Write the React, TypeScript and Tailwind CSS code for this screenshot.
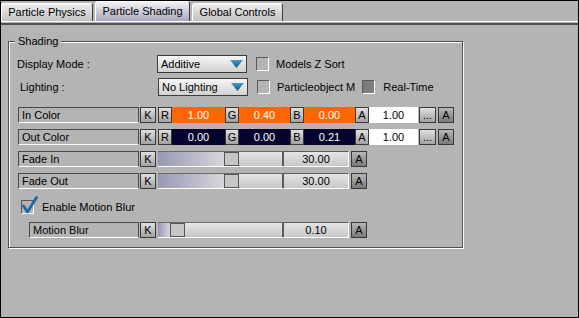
import React from 'react';

const BG = 'bg-[#b4b4b4]';

const Tab: React.FC<{ label: string; active?: boolean; w: string }> = ({ label, active, w }) => (
  <div
    className={`${w} ${active ? 'h-[20px] from-[#f2f2f4] to-[#a8a8be]' : 'h-[18px] from-[#eeeeee] to-[#c2c2c2]'} bg-linear-to-b rounded-t-[3px] border-t border-l border-white border-r border-r-[#3c3c3c] flex items-center justify-center leading-none`}
  >
    {label}
  </div>
);

const Dropdown: React.FC<{ value: string }> = ({ value }) => (
  <div className="w-[90px] h-[18px] border border-[#3c3c3c] bg-linear-to-b from-[#f6f6f6] to-[#d2d2d2] flex items-center justify-between pl-[3px] pr-[3px]">
    <span>{value}</span>
    <svg width="13" height="8" viewBox="0 0 13 8">
      <defs>
        <linearGradient id="tri" x1="0" y1="0" x2="0" y2="1">
          <stop offset="0" stopColor="#4a9bd0" />
          <stop offset="1" stopColor="#11557f" />
        </linearGradient>
      </defs>
      <polygon points="0,0 13,0 6.5,8" fill="url(#tri)" />
    </svg>
  </div>
);

const CheckBox: React.FC<{ fill?: boolean }> = ({ fill }) => (
  <div
    className={`w-[13px] h-[14px] border-t border-l border-[#5a5a5a] border-b border-r border-b-white border-r-white ${fill ? 'bg-[#7c7c7c]' : ''}`}
  />
);

const LabelBox: React.FC<{ label: string; w?: string }> = ({ label, w = 'w-[121px]' }) => (
  <div className={`${w} h-[16px] border-t border-l border-r border-[#4a4a4a] border-b border-b-white pl-[3px] flex items-center`}>
    {label}
  </div>
);

const KeyBtn: React.FC<{ t: string; dark?: boolean; w?: string }> = ({ t, dark, w = 'w-[16px]' }) => (
  <div
    className={`${w} h-[16px] border border-[#3a3a3a] bg-linear-to-b ${dark ? 'from-[#b8b8b8] to-[#7a7a7a]' : 'from-[#e0e0e0] to-[#a2a2a2]'} flex items-center justify-center leading-none`}
  >
    {t}
  </div>
);

const ColorRow: React.FC<{ label: string; vals: string[]; bg: string }> = ({ label, vals, bg }) => (
  <div className="flex items-center h-[16px]">
    <LabelBox label={label} />
    <div className="w-px" />
    <KeyBtn t="K" />
    <div className="w-[2px]" />
    <KeyBtn t="R" w="w-[14px]" />
    <div className={`w-[53px] h-[16px] ${bg} text-white flex items-center justify-center`}>{vals[0]}</div>
    <KeyBtn t="G" w="w-[14px]" />
    <div className={`w-[51px] h-[16px] ${bg} text-white flex items-center justify-center`}>{vals[1]}</div>
    <KeyBtn t="B" w="w-[14px]" />
    <div className={`w-[51px] h-[16px] ${bg} text-white flex items-center justify-center`}>{vals[2]}</div>
    <KeyBtn t="A" w="w-[14px]" />
    <div className="w-[49px] h-[16px] bg-white flex items-center justify-center">1.00</div>
    <div className="w-px" />
    <KeyBtn t="..." w="w-[17px]" />
    <div className="w-[2px]" />
    <KeyBtn t="A" dark />
  </div>
);

const SliderRow: React.FC<{ label: string; value: string; pos: number; labelW?: string; indent?: string }> = ({
  label,
  value,
  pos,
  labelW,
  indent = '',
}) => (
  <div className={`flex items-center h-[16px] ${indent}`}>
    <LabelBox label={label} w={labelW} />
    <div className="w-px" />
    <KeyBtn t="K" />
    <div className="w-[2px]" />
    <div className="w-[125px] h-[16px] flex border-t border-[#6a6a6a] border-b border-b-white">
      <div className="h-full bg-linear-to-r from-[#9898b2] to-[#d6d6da]" style={{ width: pos }} />
      <div className="w-[15px] h-full border border-[#555555] bg-[#c6c6c6]" />
      <div className="flex-1 h-full bg-linear-to-b from-[#e6e6e6] to-[#c6c6c6] border-r border-[#5a5a5a]" />
    </div>
    <div className="w-[66px] h-[16px] border-t border-l border-[#5a5a5a] border-b border-r border-b-white border-r-white bg-linear-to-b from-[#e4e4e4] to-[#c8c8c8] flex items-center justify-center">
      {value}
    </div>
    <div className="w-[2px]" />
    <KeyBtn t="A" dark />
  </div>
);

export default function App() {
  return (
    <div className={`w-[579px] h-[318px] ${BG} border border-black flex flex-col text-[11px] text-black font-['Liberation_Sans',Arial,sans-serif]`}>
      {/* tabs */}
      <div className="flex items-end gap-[2px] h-[20px]">
        <Tab label="Particle Physics" w="w-[92px]" />
        <Tab label="Particle Shading" w="w-[95px]" active />
        <Tab label="Global Controls" w="w-[91px]" />
      </div>
      <div className="h-px bg-white" />
      <div className="h-px" />
      <div className="h-[2px] bg-[#505050]" />

      <div className="pl-[7px] pt-[16px]">
        <div className="relative w-[455px] h-[207px] border border-[#505050] shadow-[inset_1px_1px_0_#fff,1px_1px_0_#fff] pl-[9px] pt-[13px]">
          <div className={`absolute -top-[7px] left-[6px] px-[3px] ${BG} leading-[13px]`}>Shading</div>

          <div className="flex items-center h-[18px]">
            <div className="w-[140px] -ml-px">Display Mode :</div>
            <Dropdown value="Additive" />
            <div className="w-[9px]" />
            <CheckBox />
            <div className="ml-[7px]">Models Z Sort</div>
          </div>
          <div className="flex items-center h-[18px] mt-[5px]">
            <div className="w-[140px] pl-[2px]">Lighting :</div>
            <Dropdown value="No Lighting" />
            <div className="w-[9px]" />
            <CheckBox />
            <div className="ml-[7px]">Particleobject M</div>
            <div className="ml-[7px]">
              <CheckBox fill />
            </div>
            <div className="ml-[8px]">Real-Time</div>
          </div>

          <div className="flex flex-col gap-[6px] mt-[11px]">
            <ColorRow label="In Color" vals={['1.00', '0.40', '0.00']} bg="bg-[#ff6600]" />
            <ColorRow label="Out Color" vals={['0.00', '0.00', '0.21']} bg="bg-[#03032e]" />
            <SliderRow label="Fade In" value="30.00" pos={66} />
            <SliderRow label="Fade Out" value="30.00" pos={66} />
          </div>

          <div className="flex items-center h-[14px] mt-[11px] ml-[3px]">
            <div className="relative">
              <CheckBox />
              <svg className="absolute -top-[4px] left-[1px]" width="16" height="18" viewBox="0 0 16 18">
                <path d="M1.5 10 L5.5 16 L14.5 1.5" fill="none" stroke="#1c6aa4" strokeWidth="2.8" strokeLinecap="round" strokeLinejoin="round" />
              </svg>
            </div>
            <div className="ml-[8px]">Enable Motion Blur</div>
          </div>

          <div className="mt-[8px]">
            <SliderRow label="Motion Blur" value="0.10" pos={12} labelW="w-[110px]" indent="ml-[11px]" />
          </div>
        </div>
      </div>
    </div>
  );
}
